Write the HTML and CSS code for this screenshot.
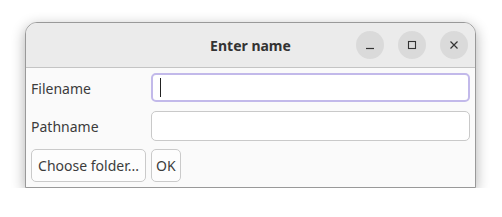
FILE: index.html
```html
<!DOCTYPE html>
<html lang="en">
<head>
    <meta charset="UTF-8">
    <title>Enter name</title>
    <link rel="stylesheet" href="styles.css">
</head>
<body>

<div class="window">
    <div class="titlebar">
        <span class="title">Enter name</span>
        <div class="controls">
            <span class="ctl">
                <svg width="10" height="10" viewBox="0 0 10 10"><path d="M1 8.5h8" stroke="#333" stroke-width="1.2"/></svg>
            </span>
            <span class="ctl">
                <svg width="10" height="10" viewBox="0 0 10 10"><rect x="1.5" y="1.5" width="7" height="7" fill="none" stroke="#333" stroke-width="1.1"/></svg>
            </span>
            <span class="ctl">
                <svg width="10" height="10" viewBox="0 0 10 10"><path d="M1.5 1.5l7 7M8.5 1.5l-7 7" stroke="#333" stroke-width="1.2"/></svg>
            </span>
        </div>
    </div>

    <form class="content" action="#">
        <label for="filename" class="lbl">Filename</label>
        <div class="field">
            <input type="text" id="filename" class="entry focus">
            <span class="caret"></span>
        </div>

        <label for="pathname" class="lbl">Pathname</label>
        <div class="field">
            <input type="text" id="pathname" class="entry">
        </div>

        <button type="button" class="btn">Choose folder...</button>
        <div>
            <button type="submit" class="btn">OK</button>
        </div>
    </form>
</div>

</body>
</html>
```

FILE: styles.css
```css
* {
    margin: 0;
    padding: 0;
    box-sizing: border-box;
}

body {
    background: white;
    font-family: "Noto Sans", "DejaVu Sans", sans-serif;
    font-size: 14px;
    color: #3c3c3c;
}

.window {
    width: 451px;
    height: 166px;
    margin: 22px 0 0 25px;
    border: 1px solid #999999;
    border-radius: 12px 12px 0 0;
    background-color: #fafafa;
    box-shadow: 0 4px 14px rgba(0, 0, 0, 0.32);
}

.titlebar {
    height: 45px;
    display: flex;
    align-items: center;
    justify-content: center;
    background-color: #ebebeb;
    border-bottom: 1px solid #c4c4c4;
    border-radius: 11px 11px 0 0;
    position: relative;
}

.title {
    font-weight: bold;
    color: #333;
    font-size: 14px;
}

.controls {
    position: absolute;
    right: 7px;
    top: 8px;
    display: flex;
    gap: 14px;
}

.ctl {
    width: 28px;
    height: 28px;
    border-radius: 50%;
    background-color: #dadada;
    display: flex;
    align-items: center;
    justify-content: center;
}

.content {
    display: grid;
    grid-template-columns: 115px 1fr;
    grid-template-rows: 30px 30px 33px;
    column-gap: 5px;
    row-gap: 8px;
    padding: 5px 5px 0 5px;
    align-items: center;
}

.field {
    position: relative;
    height: 30px;
}

.entry {
    width: 100%;
    height: 30px;
    border: 1px solid #c9c9c9;
    border-radius: 5px;
    background: white;
    outline: none;
    caret-color: transparent;
    font: inherit;
}

.focus {
    height: 29px;
    border: 2px solid #c2b9ea;
}

.caret {
    position: absolute;
    left: 9px;
    top: 5px;
    width: 1px;
    height: 19px;
    background: #222;
}

.btn {
    height: 33px;
    padding: 0 4px;
    border: 1px solid #cacaca;
    border-radius: 5px;
    background: #fdfdfd;
    font: inherit;
    color: #3c3c3c;
}

.content > .btn {
    width: 100%;
}
```
